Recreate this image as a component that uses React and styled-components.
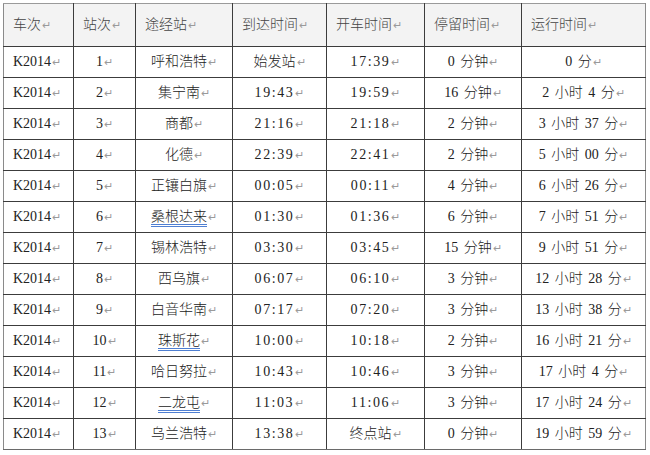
import React from 'react';
import styled, { createGlobalStyle } from 'styled-components';

const GlobalStyle = createGlobalStyle`
    html, body {
        margin: 0;
        padding: 0;
        background: #ffffff;
    }
`;

const stops = [
    { no: 1, name: '呼和浩特', arrive: '始发站', depart: '17:39', stay: '0 分钟', run: '0 分' },
    { no: 2, name: '集宁南', arrive: '19:43', depart: '19:59', stay: '16 分钟', run: '2 小时 4 分' },
    { no: 3, name: '商都', arrive: '21:16', depart: '21:18', stay: '2 分钟', run: '3 小时 37 分' },
    { no: 4, name: '化德', arrive: '22:39', depart: '22:41', stay: '2 分钟', run: '5 小时 00 分' },
    { no: 5, name: '正镶白旗', arrive: '00:05', depart: '00:11', stay: '4 分钟', run: '6 小时 26 分' },
    { no: 6, name: '桑根达来', arrive: '01:30', depart: '01:36', stay: '6 分钟', run: '7 小时 51 分', flagged: true },
    { no: 7, name: '锡林浩特', arrive: '03:30', depart: '03:45', stay: '15 分钟', run: '9 小时 51 分' },
    { no: 8, name: '西乌旗', arrive: '06:07', depart: '06:10', stay: '3 分钟', run: '12 小时 28 分' },
    { no: 9, name: '白音华南', arrive: '07:17', depart: '07:20', stay: '3 分钟', run: '13 小时 38 分' },
    { no: 10, name: '珠斯花', arrive: '10:00', depart: '10:18', stay: '2 分钟', run: '16 小时 21 分', flagged: true },
    { no: 11, name: '哈日努拉', arrive: '10:43', depart: '10:46', stay: '3 分钟', run: '17 小时 4 分' },
    { no: 12, name: '二龙屯', arrive: '11:03', depart: '11:06', stay: '3 分钟', run: '17 小时 24 分', flagged: true },
    { no: 13, name: '乌兰浩特', arrive: '13:38', depart: '终点站', stay: '0 分钟', run: '19 小时 59 分' },
];

const headers = ['车次', '站次', '途经站', '到达时间', '开车时间', '停留时间', '运行时间'];
const widths = [70, 62, 97, 94, 98, 97, 124];

// 시간 값(hh:mm)만 자간을 넓힘
const isTime = (v) => /^\d\d:\d\d$/.test(v);

const Page = styled.div`
    padding: 3px 0 0 3px;
    font-family: "Liberation Serif", "Noto Sans CJK SC", serif;
    font-size: 14px;
    font-weight: 300;
    color: #222;
`;

const Table = styled.table`
    border-collapse: collapse;
    table-layout: fixed;
    width: 642px;
`;

const HeadRow = styled.tr`
    height: 43px;
    background: #f3f3f3;
`;

const Row = styled.tr`
    height: 31px;
`;

const Cell = styled.td`
    border: 1px solid #3c3c3c;
    padding: 0 9px;
    text-align: ${(p) => p.$align || 'center'};
    vertical-align: middle;
    white-space: nowrap;
    line-height: 1;
    word-spacing: 2px;

    tr:first-child > & {
        border-top-color: #9a9a9a;
    }
    &:first-child {
        border-left-color: #8a8a8a;
    }
    &:last-child {
        border-right-color: #8a8a8a;
    }
    tr:last-child > & {
        border-bottom-color: #6a6a6a;
    }
`;

const HeadCell = styled(Cell).attrs({ as: 'th' })`
    font-weight: 300;
    color: #444;
    text-align: left;
`;

const Time = styled.span`
    letter-spacing: 1.6px;
`;

const Mark = styled.span`
    color: #9a9a9a;
    font-family: "DejaVu Sans", sans-serif;
    font-size: 11px;
    margin-left: 1px;
`;

const Flagged = styled.span`
    text-decoration: underline double #4f7fd2;
    text-underline-offset: 3px;
    text-decoration-thickness: 1px;
`;

const Text = ({ children, flagged }) => {
    let content = children;
    if (isTime(children)) content = <Time>{children}</Time>;
    if (flagged) content = <Flagged>{children}</Flagged>;
    return (
        <>
            {content}
            <Mark>↵</Mark>
        </>
    );
};

const App = () => {
    return (
        <Page>
            <GlobalStyle />
            <Table>
                <colgroup>
                    {widths.map((w, idx) => (
                        <col key={idx} style={{ width: w }} />
                    ))}
                </colgroup>
                <tbody>
                    <HeadRow>
                        {headers.map((h) => (
                            <HeadCell key={h}>
                                <Text>{h}</Text>
                            </HeadCell>
                        ))}
                    </HeadRow>
                    {stops.map((s) => (
                        <Row key={s.no}>
                            <Cell $align="left"><Text>K2014</Text></Cell>
                            <Cell><Text>{s.no}</Text></Cell>
                            <Cell><Text flagged={s.flagged}>{s.name}</Text></Cell>
                            <Cell><Text>{s.arrive}</Text></Cell>
                            <Cell><Text>{s.depart}</Text></Cell>
                            <Cell><Text>{s.stay}</Text></Cell>
                            <Cell><Text>{s.run}</Text></Cell>
                        </Row>
                    ))}
                </tbody>
            </Table>
        </Page>
    );
};

export default App;
